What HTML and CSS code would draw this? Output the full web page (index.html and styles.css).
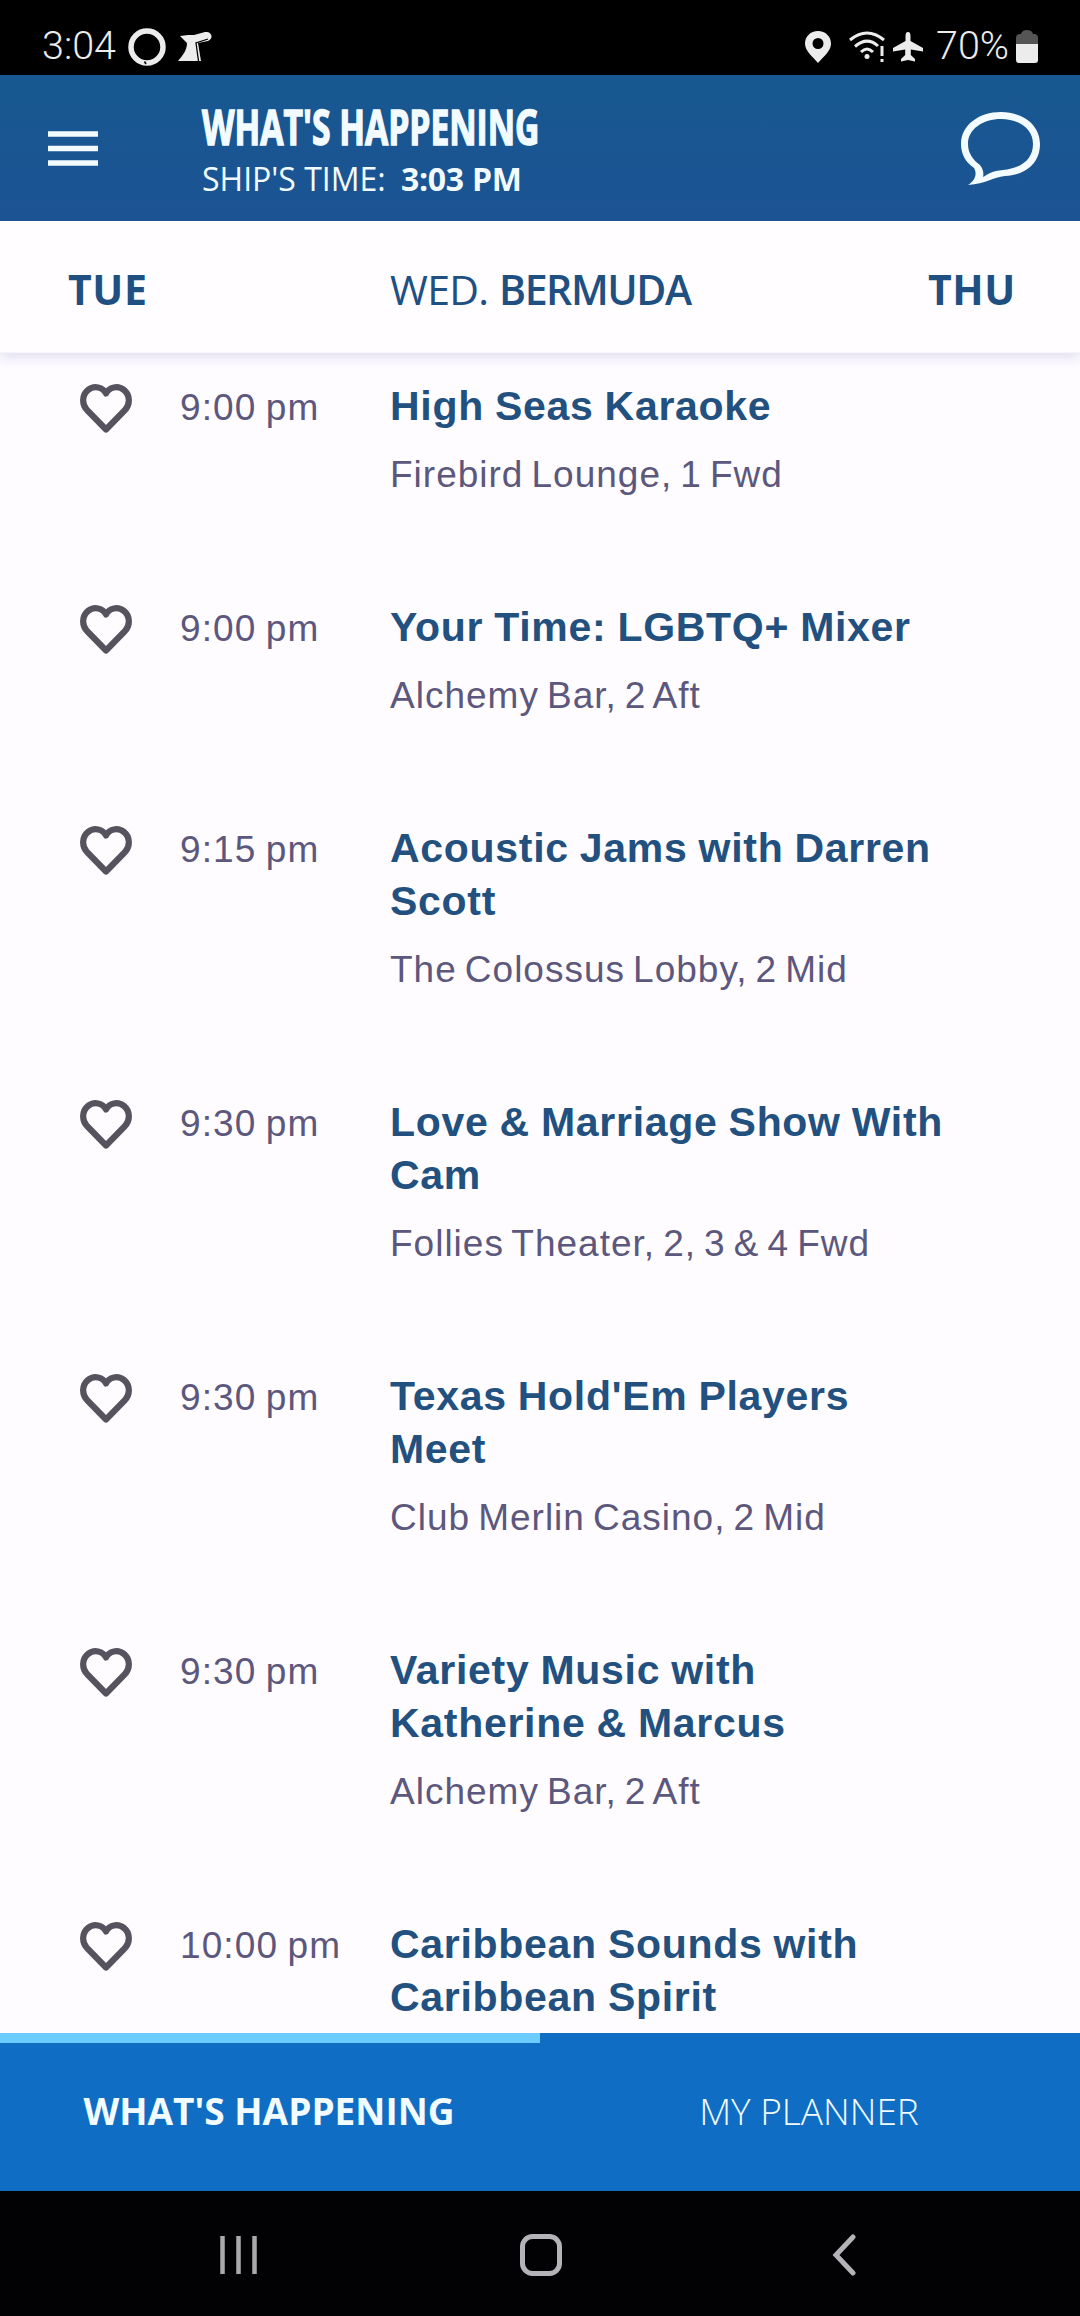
FILE: index.html
```html
<!DOCTYPE html>
<html lang="en">
<head>
<meta charset="utf-8">
<title>What's Happening</title>
<link rel="stylesheet" href="styles.css">
</head>
<body>
<svg class="defs" width="0" height="0" aria-hidden="true">
  <symbol id="heart" viewBox="0 0 54 52"><path d="M26 46.500 7 27C1.500 21 2 12 8 7C14 2 23 4 26 10.500C29 4 38 2 44 7C50 12 50.500 21 45 27Z" fill="none" stroke="currentColor" stroke-width="6.200" stroke-linejoin="round"/></symbol>
</svg>
<div class="statusbar">
  <div class="status-left">
    <span class="clock">3:04</span>
    <svg class="ring" width="38" height="40" viewBox="0 0 38 40"><circle cx="19" cy="19" r="16" fill="none" stroke="#ececec" stroke-width="5.500"/><path d="M16.500 33.500 18 36" stroke="#000" stroke-width="1.500"/></svg>
    <svg class="mill" width="36" height="36" viewBox="0 0 36 36"><path d="M2 4 10 3 16 3 27 0C34-1 36 7 30 9L20 11 23 29H0C5 23 9 18 9 11Z" fill="#ececec"/><path d="M20.500 29 18 11 30 7" fill="none" stroke="#000" stroke-width="1.300"/></svg>
  </div>
  <div class="status-right">
    <svg class="pin" width="26" height="32" viewBox="0 0 26 32"><path fill="#ececec" fill-rule="evenodd" d="M13 0C5.500 0 0 5.500 0 12.500C0 20 7 25 13 32C19 25 26 20 26 12.500C26 5.500 20.500 0 13 0ZM13 7A5.500 5.500 0 1 1 13 18A5.500 5.500 0 0 1 13 7Z"/></svg>
    <svg class="wifi" width="36" height="32" viewBox="0 0 36 32"><g fill="none" stroke="#ececec" stroke-width="3"><path d="M1 9Q18-5 35 9M6 15.500Q18 5 29 15M12 21Q18 15 24 21"/><path d="M33 15V25M33 28V31"/></g><circle cx="18" cy="25.500" r="2.500" fill="#ececec"/></svg>
    <svg class="plane" width="30" height="30" viewBox="0 0 30 30"><path fill="#ececec" d="M15 0C17 0 17.500 2 17.500 4V9L30 16V19.500L17.800 17.500V23L22 27V29.500L15 28 8 29.500V27L12.200 23V17.500L0 19.500V16L12.500 9V4C12.500 2 13 0 15 0Z"/></svg>
    <span class="percent">70%</span>
    <svg class="battery" width="22" height="33" viewBox="0 0 22 33"><path d="M0 14V8Q0 4 4 4H5Q6 0 11 0T17 4H18Q22 4 22 8V14Z" fill="#555"/><path d="M0 14H22V30Q22 33 19 33H3Q0 33 0 30Z" fill="#ececec"/></svg>
  </div>
</div>
<header class="header">
  <svg class="menu" width="50" height="36" viewBox="0 0 50 36"><path d="M0 3H50M0 17.500H50M0 32H50" stroke="#f2fbff" stroke-width="5.500"/></svg>
  <div class="heading">
    <h1 class="title"><span class="title-text">WHAT'S HAPPENING</span></h1>
    <div class="ship-time">SHIP'S TIME: <b class="ship-clock">3:03 PM</b></div>
  </div>
  <svg class="chat" width="82" height="76" viewBox="0 0 82 76"><path fill="#f2fbff" fill-rule="evenodd" d="M8 74C16 69 17 62 14 57C5 51 1 42 1 33C1 14 19 1 41 1S80 14 80 33C80 52 66 64 45 65C33 66 26 73 8 74ZM23 66C28 63 32 60 43 59C62 57 73 48 73 33C73 18 59 8 41 8S8 18 8 33C8 42 13 49 20 54C23 58 24 62 23 66Z"/></svg>
</header>
<nav class="days">
  <a class="day prev">TUE</a>
  <div class="current"><span class="weekday">WED.</span> <span class="port">BERMUDA</span></div>
  <a class="day next">THU</a>
</nav>
<main class="events">
  <article class="event"><svg class="heart"><use href="#heart"/></svg><time class="time">9:00 pm</time><div class="info"><h2 class="name">High Seas Karaoke</h2><p class="place">Firebird Lounge, 1 Fwd</p></div></article>
  <article class="event"><svg class="heart"><use href="#heart"/></svg><time class="time">9:00 pm</time><div class="info"><h2 class="name">Your Time: LGBTQ+ Mixer</h2><p class="place">Alchemy Bar, 2 Aft</p></div></article>
  <article class="event"><svg class="heart"><use href="#heart"/></svg><time class="time">9:15 pm</time><div class="info"><h2 class="name">Acoustic Jams with Darren<br>Scott</h2><p class="place">The Colossus Lobby, 2 Mid</p></div></article>
  <article class="event"><svg class="heart"><use href="#heart"/></svg><time class="time">9:30 pm</time><div class="info"><h2 class="name">Love &amp; Marriage Show With<br>Cam</h2><p class="place">Follies Theater, 2, 3 &amp; 4 Fwd</p></div></article>
  <article class="event"><svg class="heart"><use href="#heart"/></svg><time class="time">9:30 pm</time><div class="info"><h2 class="name">Texas Hold'Em Players<br>Meet</h2><p class="place">Club Merlin Casino, 2 Mid</p></div></article>
  <article class="event"><svg class="heart"><use href="#heart"/></svg><time class="time">9:30 pm</time><div class="info"><h2 class="name">Variety Music with<br>Katherine &amp; Marcus</h2><p class="place">Alchemy Bar, 2 Aft</p></div></article>
  <article class="event"><svg class="heart"><use href="#heart"/></svg><time class="time">10:00 pm</time><div class="info"><h2 class="name">Caribbean Sounds with<br>Caribbean Spirit</h2></div></article>
</main>
<footer class="tabs">
  <div class="tab active"><span class="tab-bold">WHAT'S HAPPENING</span></div>
  <div class="tab"><span class="tab-light">MY PLANNER</span></div>
</footer>
<div class="navbar">
  <svg class="recents" width="38" height="42" viewBox="0 0 38 42"><path d="M3.500 2V40M19.500 2V40M35.500 2V40" stroke="#aaa" stroke-width="4.500"/></svg>
  <svg class="home" width="42" height="42" viewBox="0 0 42 42"><rect x="2.500" y="2.500" width="37" height="37" rx="10" fill="none" stroke="#b4b4b8" stroke-width="5"/></svg>
  <svg class="back" width="24" height="42" viewBox="0 0 24 42"><path d="M21 3 4 21 21 39" fill="none" stroke="#b4b4b8" stroke-width="5" stroke-linecap="round"/></svg>
</div>
</body>
</html>
```
FILE: styles.css
```css
* { box-sizing: border-box; }
body { margin: 0; width: 1080px; height: 2316px; overflow: hidden; display: flex; flex-direction: column; background: #fefcff; font-family: "Liberation Sans", Arial, sans-serif; }
svg { display: block; flex: none; }
.defs { position: absolute; }
h1, h2, p { margin: 0; white-space: nowrap; }

.statusbar { height: 75px; flex: none; background: #000; color: #ececec; display: flex; justify-content: space-between; padding: 28px 42px 0 42px; font: 39.5px/36px Roboto, sans-serif; font-weight: 300; }
.status-left, .status-right { display: flex; height: 38px; white-space: nowrap; }
.clock { width: 86px; }
.mill { margin: 4px 0 0 12px; }
.pin { margin: 3px 18px 0 0; }
.wifi { margin: 3px 8px 0 0; }
.plane { margin: 4px 13px 0 0; }
.percent { width: 80px; }
.battery { margin: 2px 0 0; }

.header { height: 146px; flex: none; background: linear-gradient(#175890, #1c5394); display: flex; color: #f2fbff; font-family: "Open Sans", sans-serif; }
.menu { margin: 56px 0 0 48px; }
.heading { margin: 31px 0 0 104px; width: 400px; }
.title { height: 42px; font: 700 48px/42px "Open Sans", sans-serif; }
.title-text { display: inline-block; transform-origin: 0 50%; transform: scaleX(.701); -webkit-text-stroke: 1.5px #f2fbff; }
.ship-time { margin-top: 13px; font-size: 32px; line-height: 36px; white-space: nowrap; }
.ship-clock { margin-left: 7px; letter-spacing: -.3px; }
.chat { margin: 36px 0 0 358px; }

.days { height: 132px; flex: none; background: #fffdff; display: grid; grid-template-columns: 390px 538px 1fr; align-items: center; padding-top: 4px; color: #205082; border-bottom: 1px solid #f7f4fb; font: 41px/50px "Open Sans", sans-serif; box-shadow: 0 4px 12px #dfdcef; position: relative; z-index: 1; white-space: nowrap; clip-path: inset(0 0 -20px 0); }
.day { font-weight: 700; letter-spacing: .6px; }
.prev { padding-left: 68px; }
.weekday { letter-spacing: -.7px; }
.port { font-weight: 600; letter-spacing: -1.4px; }

.events { flex: 1; min-height: 0; overflow: hidden; padding-top: 27px; }
.event { display: grid; grid-template-columns: 100px 210px 1fr; padding-left: 80px; }
.event { height: 221px; }
.event:nth-child(n+3) { height: 274px; }
.heart { width: 54px; height: 52px; color: #56535f; margin-top: 3px; }
.time { color: #5c577c; font-size: 37px; line-height: 53px; padding-top: 1px; white-space: nowrap; letter-spacing: 1.1px; word-spacing: -2px; }
.name { color: #22507f; font-size: 41px; line-height: 53px; letter-spacing: .7px; word-spacing: -1px; }
.place { color: #5c577c; font-size: 37px; line-height: 42px; margin-top: 21px; letter-spacing: 1px; word-spacing: -3.2px; }

.tabs { height: 158px; flex: none; background: #0f6ec4; color: #f2fbff; display: grid; grid-template-columns: 1fr 1fr; font: 37px/40px "Open Sans", sans-serif; }
.tab { border-top: 10px solid #0f6ec4; display: flex; justify-content: center; padding-top: 48px; padding-right: 2px; white-space: nowrap; }
.active { border-color: #6cccff; }
.tab-bold { font-weight: 700; }
.tab-light { font-weight: 300; }

.navbar { height: 125px; flex: none; background: #020103; display: flex; padding: 43px 0 0 219px; }
.home { margin-left: 263px; }
.back { margin-left: 270px; }
```
